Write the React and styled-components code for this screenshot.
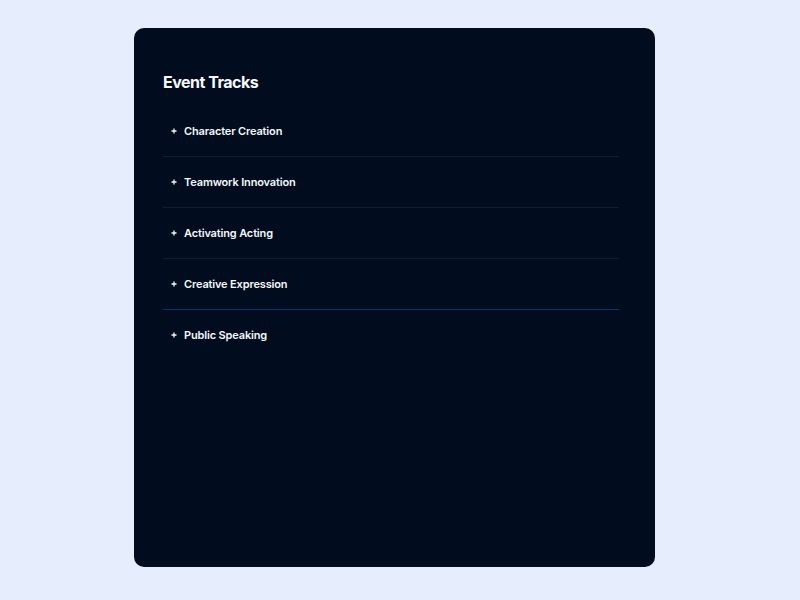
import React from 'react';
import styled, { createGlobalStyle } from 'styled-components';

const GlobalStyle = createGlobalStyle`
  html, body {
    margin: 0;
    padding: 0;
    background: #e6eefd;
    font-family: Inter, "Liberation Sans", sans-serif;
  }
`;

const Page = styled.div`
  width: 800px;
  height: 600px;
  display: flex;
  padding: 28px 0 0 134px;
  box-sizing: border-box;
`;

const Card = styled.div`
  width: 521px;
  height: 539px;
  background: #010d1f;
  border-radius: 10px;
  padding: 43px 0 0 29px;
  box-sizing: border-box;
`;

const Title = styled.h2`
  margin: 0 0 13px;
  font-size: 16px;
  line-height: 22px;
  font-weight: 700;
  color: #f7f8fb;
  letter-spacing: -0.5px;
`;

const List = styled.div`
  display: flex;
  flex-direction: column;
  width: 456px;
`;

const Row = styled.div`
  height: 50px;
  display: flex;
  align-items: center;
  gap: 7px;
  padding-left: 8px;
`;

const Divider = styled.div`
  height: 1px;
  background: ${({ $blue }) => ($blue ? '#0d2f7c' : '#111c2f')};
`;

const Label = styled.span`
  font-size: 11px;
  font-weight: 600;
  color: #f5f7fa;
  letter-spacing: -0.15px;
`;

const Plus = () => (
  <svg width="6" height="6" viewBox="0 0 6 6">
    <path d="M3 0.5V5.5M0.5 3H5.5" stroke="#f5f7fa" strokeWidth="1.3" />
  </svg>
);

const tracks = [
  'Character Creation',
  'Teamwork Innovation',
  'Activating Acting',
  'Creative Expression',
  'Public Speaking',
];

function App() {
  return (
    <>
      <GlobalStyle />
      <Page>
        <Card>
          <Title>Event Tracks</Title>
          <List>
            {tracks.map((t, i) => (
              <React.Fragment key={t}>
                <Row>
                  <Plus />
                  <Label>{t}</Label>
                </Row>
                {i < tracks.length - 1 && <Divider $blue={i === 3} />}
              </React.Fragment>
            ))}
          </List>
        </Card>
      </Page>
    </>
  );
}

export default App;
